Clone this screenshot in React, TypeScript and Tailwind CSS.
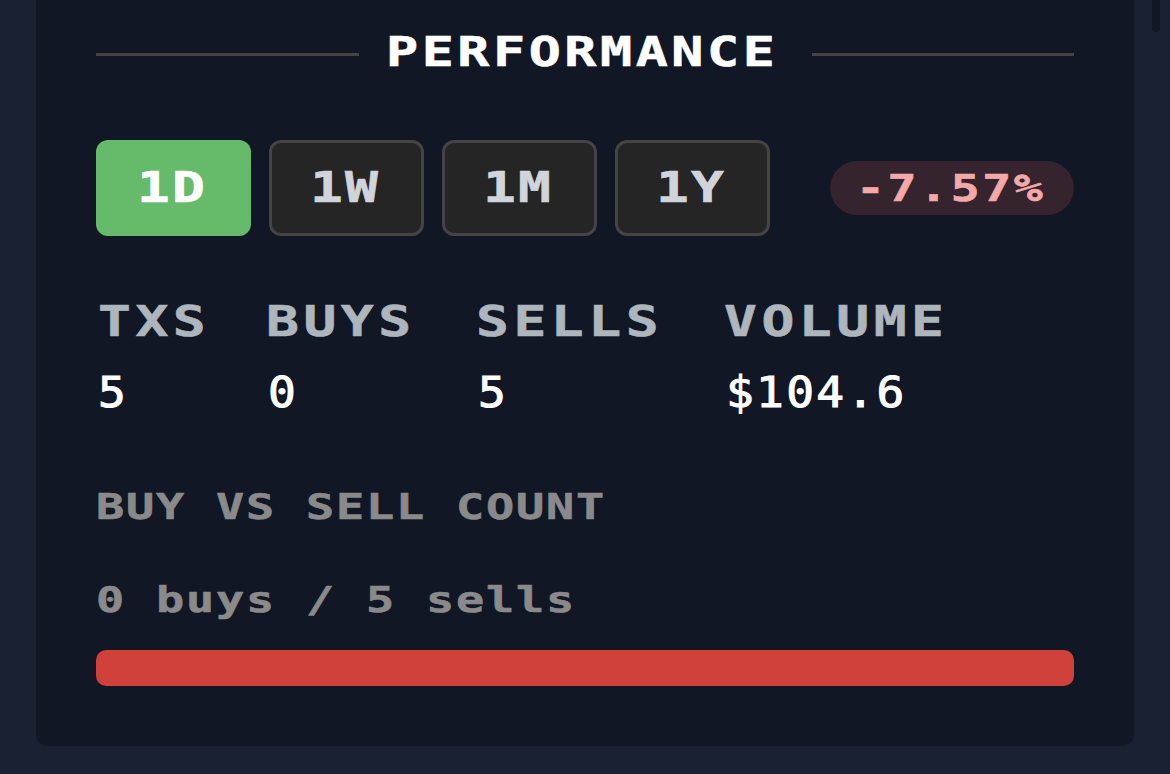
import React from 'react';

const pixel = "inline-block origin-left scale-x-[1.3] whitespace-nowrap font-['DejaVu_Sans_Mono',monospace] font-bold [-webkit-text-stroke-width:0.6px]";

const ranges = [
  { id: '1D', active: true },
  { id: '1W', active: false },
  { id: '1M', active: false },
  { id: '1Y', active: false },
];

const stats = [
  { label: 'TXS', value: '5', width: 'w-[110px]', labelPad: 'pl-[2px]' },
  { label: 'BUYS', value: '0', width: 'w-[150px]', labelPad: '' },
  { label: 'SELLS', value: '5', width: 'w-[188px]', labelPad: '' },
  { label: 'VOLUME', value: '$104.6', width: 'w-[240px]', labelPad: '' },
];

export default function App() {
  return (
    <div className="relative h-[774px] overflow-hidden bg-[#1a2133] px-[36px]">
      <div className="absolute right-[10px] top-[-8px] h-[40px] w-[8px] rounded-full bg-[#111725]" />
      <div className="flex h-[746px] w-[1098px] flex-col rounded-b-xl bg-[#111725] px-[60px] pt-[28px]">
        <div className="flex h-[48px] items-center">
          <div className="mr-[27px] mt-[4px] h-[3px] flex-1 bg-[#444444]" />
          <div className="h-[48px] w-[395px] leading-[49px]">
            <span className={`${pixel} text-[41px] tracking-[2.75px] text-white`}>PERFORMANCE</span>
          </div>
          <div className="ml-[31px] mt-[4px] h-[3px] flex-1 bg-[#444444]" />
        </div>

        <div className="mt-[64px] flex items-center">
          <div className="flex gap-[18px]">
            {ranges.map((r) => (
              <div
                key={r.id}
                className={
                  r.active
                    ? 'flex h-[96px] w-[155px] items-center justify-center rounded-xl bg-[#66bb6a] pr-[6px]'
                    : 'flex h-[96px] w-[155px] items-center justify-center rounded-xl border-[3px] border-[#444444] bg-[#252525] pr-[6px]'
                }
              >
                <div className="w-[68px]">
                  <span className={`${pixel} text-[42px] leading-none tracking-[1.6px] ${r.active ? 'text-white' : 'text-[#d1d5db]'}`}>
                    {r.id}
                  </span>
                </div>
              </div>
            ))}
          </div>
          <div className="ml-auto flex h-[54px] w-[244px] items-center justify-center rounded-full bg-[#35232e] pr-[6px]">
            <div className="w-[186px]">
              <span className={`${pixel} text-[37px] leading-none tracking-[2px] text-[#f4a9a9]`}>-7.57%</span>
            </div>
          </div>
        </div>

        <div className="mt-[65px] flex gap-[60px]">
          {stats.map((s) => (
            <div key={s.label} className={s.width}>
              <div className={`h-[42px] leading-[42px] ${s.labelPad}`}>
                <span className={`${pixel} text-[42px] tracking-[3.5px] text-[#adb5bd]`}>{s.label}</span>
              </div>
              <div className="mt-[28px] h-[44px] pl-[2px]">
                <span className="inline-block origin-left scale-x-[1.1] whitespace-nowrap font-['DejaVu_Sans_Mono',monospace] text-[42px] leading-[44px] tracking-[2.1px] text-white [-webkit-text-stroke-width:1px]">
                  {s.value}
                </span>
              </div>
            </div>
          ))}
        </div>

        <div className="mt-[74px] h-[36px] leading-[36px]">
          <span className={`${pixel} text-[36px] tracking-[1.4px] text-[#8a8a8a]`}>BUY VS SELL COUNT</span>
        </div>
        <div className="mt-[57px] h-[36px] leading-[36px]">
          <span className={`${pixel} text-[36px] tracking-[1.4px] text-[#8a8a8a]`}>0 buys / 5 sells</span>
        </div>

        <div className="mt-[32px] h-[36px] rounded-[10px] bg-[#d0413a]" />
      </div>
    </div>
  );
}
